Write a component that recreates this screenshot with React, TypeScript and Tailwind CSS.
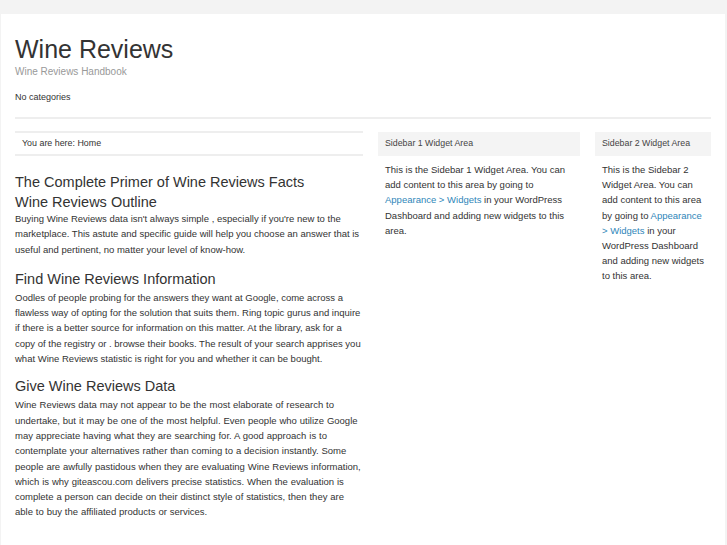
import React from 'react';

function Sidebar({ title, narrow, children }: { title: string; narrow?: boolean; children: React.ReactNode }) {
  return (
    <aside className={narrow ? 'w-[116px] shrink-0' : 'w-[202px] shrink-0'}>
      <h4 className="mt-[1px] flex h-[24px] items-center bg-[#f4f4f4] px-[7px] text-[8.8px] font-normal text-[#444]">{title}</h4>
      <div className="px-[7px] pt-[6px] text-[9.5px] leading-[15.2px] text-[#333]">{children}</div>
    </aside>
  );
}

function WidgetLink() {
  return <a href="#" className="text-[#2f86b9]">Appearance &gt; Widgets</a>;
}

export default function App() {
  return (
    <div className="min-h-[545px] bg-[#f3f3f3] pt-[14px] font-['Liberation_Sans',Arial,sans-serif]">
      <div className="ml-[1px] min-h-[531px] w-[724px] bg-white px-[14px]">
        <header className="pt-[20px]">
          <h1 className="text-[25px] leading-[30px] font-normal text-[#333]">Wine Reviews</h1>
          <p className="mt-[1px] text-[10px] leading-[14px] text-[#999]">Wine Reviews Handbook</p>
          <nav className="mt-[11px] text-[9px] leading-[15px] text-[#333]">No categories</nav>
          <div className="mt-[12px] h-[2px] bg-[#eeeeee]" />
        </header>

        <div className="mt-[12px] flex gap-[15px]">
          <main className="w-[348px] shrink-0 text-[#333]">
            <div className="flex h-[25px] items-center border-y-2 border-[#eeeeee] px-[7px] text-[8.9px] text-[#333]">
              You are here: Home
            </div>
            <h2 className="mt-[17px] text-[14.5px] leading-[18px] font-normal">The Complete Primer of Wine Reviews Facts</h2>
            <h3 className="mt-[2px] text-[14.5px] leading-[18px] font-normal">Wine Reviews Outline</h3>
            <p className="text-[9.5px] leading-[15.3px]">
              Buying Wine Reviews data isn't always simple , especially if you're new to the marketplace. This astute and specific guide will help you choose an answer that is useful and pertinent, no matter your level of know-how.
            </p>
            <h3 className="mt-[13px] text-[14.5px] leading-[18px] font-normal">Find Wine Reviews Information</h3>
            <p className="mt-[2px] text-[9.5px] leading-[15.3px]">
              Oodles of people probing for the answers they want at Google, come across a flawless way of opting for the solution that suits them. Ring topic gurus and inquire if there is a better source for information on this matter. At the library, ask for a copy of the registry or . browse their books. The result of your search apprises you what Wine Reviews statistic is right for you and whether it can be bought.
            </p>
            <h3 className="mt-[11px] text-[14.5px] leading-[18px] font-normal">Give Wine Reviews Data</h3>
            <p className="mt-[2px] text-[9.5px] leading-[15.3px] [word-spacing:0.25px]">
              Wine Reviews data may not appear to be the most elaborate of research to undertake, but it may be one of the most helpful. Even people who utilize Google may appreciate having what they are searching for. A good approach is to contemplate your alternatives rather than coming to a decision instantly. Some people are awfully pastidous when they are evaluating Wine Reviews information, which is why giteascou.com delivers precise statistics. When the evaluation is complete a person can decide on their distinct style of statistics, then they are able to buy the affiliated products or services.
            </p>
          </main>

          <Sidebar title="Sidebar 1 Widget Area">
            This is the Sidebar 1 Widget Area. You can add content to this area by going to <WidgetLink /> in your WordPress Dashboard and adding new widgets to this area.
          </Sidebar>

          <Sidebar title="Sidebar 2 Widget Area" narrow>
            This is the Sidebar 2 Widget Area. You can add content to this area by going to <WidgetLink /> in your WordPress Dashboard and adding new widgets to this area.
          </Sidebar>
        </div>
      </div>
    </div>
  );
}
